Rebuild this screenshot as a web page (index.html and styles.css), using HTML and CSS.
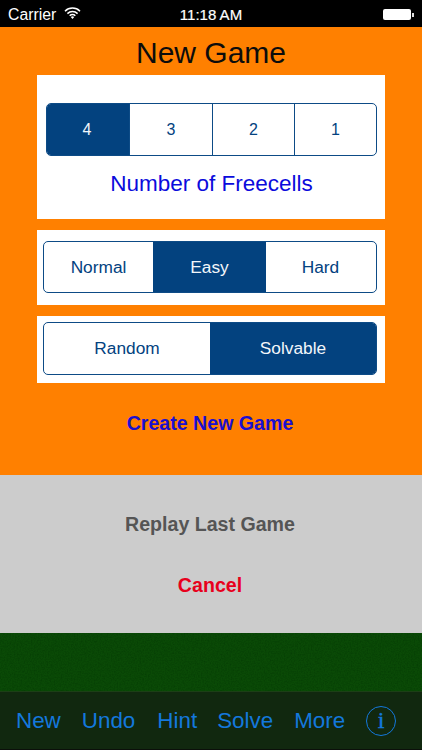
FILE: index.html
```html
<!DOCTYPE html>
<html lang="en">
<head>
<meta charset="utf-8">
<title>New Game</title>
<link rel="stylesheet" href="styles.css">
</head>
<body>
<div class="app">
  <header class="status">
    <div class="status-left">
      <span>Carrier</span>
      <svg class="wifi" width="17" height="12" viewBox="0 0 17 12"><path d="M1 4.2a10.6 10.6 0 0 1 15 0M3.4 6.6a7.2 7.2 0 0 1 10.2 0M5.7 8.8a3.9 3.9 0 0 1 5.6 0" fill="none" stroke="#fff" stroke-width="1.5"/><path d="M8.5 12l-1.7-1.9a2.4 2.4 0 0 1 3.4 0z" fill="#fff"/></svg>
    </div>
    <div class="status-time">11:18 AM</div>
    <div class="status-right">
      <span class="battery"></span><span class="battery-tip"></span>
    </div>
  </header>
  <section class="panel">
    <h1 class="title">New Game</h1>
    <div class="card card-cells">
      <div class="seg seg-cells">
        <div class="opt on">4</div>
        <div class="opt div">3</div>
        <div class="opt div">2</div>
        <div class="opt div">1</div>
      </div>
      <div class="cells-label">Number of Freecells</div>
    </div>
    <div class="card card-level">
      <div class="seg seg-level">
        <div class="opt">Normal</div>
        <div class="opt on">Easy</div>
        <div class="opt">Hard</div>
      </div>
    </div>
    <div class="card card-mode">
      <div class="seg seg-mode">
        <div class="opt">Random</div>
        <div class="opt on">Solvable</div>
      </div>
    </div>
    <div class="create">Create New Game</div>
  </section>
  <section class="sheet">
    <div class="replay">Replay Last Game</div>
    <div class="cancel">Cancel</div>
  </section>
  <section class="felt">
    <svg class="noise" width="100%" height="100%"><filter id="n" color-interpolation-filters="sRGB"><feTurbulence type="fractalNoise" baseFrequency="0.7" numOctaves="2" seed="4"/><feColorMatrix values="0 0 0 0 0.01  0 0 0 0 0.22  0 0 0 0 0.01  0 0 0 1.2 -0.42"/></filter><rect width="100%" height="100%" filter="url(#n)"/></svg>
  </section>
  <nav class="toolbar">
    <span class="tool t-new">New</span>
    <span class="tool t-undo">Undo</span>
    <span class="tool t-hint">Hint</span>
    <span class="tool t-solve">Solve</span>
    <span class="tool t-more">More</span>
    <span class="info">i</span>
  </nav>
</div>
</body>
</html>
```
FILE: styles.css
```css
* { box-sizing: border-box; }
html, body { margin: 0; padding: 0; }
body { font-family: "Liberation Sans", Arial, sans-serif; background: #000; }
.app { width: 422px; height: 750px; display: flex; flex-direction: column; overflow: hidden; }

.status { height: 27px; flex: none; background: #000; color: #fff; display: grid; grid-template-columns: 1fr auto 1fr; align-items: center; padding: 2px 8px 0 8px; font-size: 15.8px; }
.status-left { display: flex; align-items: center; gap: 8px; }
.wifi { margin-top: -3px; }
.status-time { white-space: nowrap; font-size: 15px; -webkit-text-stroke: 0.2px #fff; }
.status-right { display: flex; align-items: center; justify-content: flex-end; }
.battery { width: 28px; height: 11px; background: #fff; border-radius: 2px; }
.battery-tip { width: 2px; height: 4px; margin-left: 1px; background: #ddd; }

.panel { height: 448px; flex: none; background: #ff8000; display: flex; flex-direction: column; align-items: center; }
.title { margin: 7px 0 0; height: 41px; font-size: 30px; line-height: 38px; font-weight: 400; color: #0c0c0c; text-align: center; }
.card { width: 348px; background: #fff; }
.card-cells { height: 144px; padding: 28px 8px 0 9px; }
.card-level { height: 75px; margin-top: 11px; padding: 11px 8px 0 6px; }
.card-mode { height: 67px; margin-top: 11px; padding: 6px 8px 0 6px; }

.seg { display: flex; border: 1.5px solid #0d4b86; border-radius: 5px; overflow: hidden; color: #03427f; background: #fff; }
.seg-cells { height: 53px; font-size: 16px; }
.seg-level { height: 52px; font-size: 17.3px; }
.seg-mode { height: 53px; font-size: 17.3px; }
.opt { display: flex; align-items: center; justify-content: center; flex: 1 1 0; }
.opt.on { background: #03427f; color: #f2f6fa; }
.opt.div { border-left: 1.5px solid #0d4b86; }
.seg-cells .opt { flex: none; width: 82px; }
.seg-cells .opt:nth-child(1) { padding-right: 2px; }
.seg-cells .opt:nth-child(2) { width: 83px; }
.seg-cells .opt:nth-child(4) { flex: 1; }
.seg-level .opt { flex: none; }
.seg-level .opt:nth-child(1) { width: 109px; }
.seg-level .opt:nth-child(2) { width: 113px; }
.seg-level .opt:nth-child(3) { width: 109px; }
.seg-mode .opt:nth-child(1) { flex: none; width: 166px; }
.seg-mode .opt:nth-child(2) { flex: 1; }

.cells-label { margin-top: 15px; text-align: center; font-size: 22.5px; line-height: 25px; color: #0b0bdc; }
.create { margin-top: 28px; padding-right: 2px; font-size: 19.6px; line-height: 24px; font-weight: 700; color: #1a0fd0; text-align: center; }

.sheet { height: 158px; flex: none; background: #cccccc; display: flex; flex-direction: column; align-items: center; padding-right: 2px; font-size: 19.6px; font-weight: 700; }
.replay { margin-top: 37px; line-height: 24px; color: #555; }
.cancel { margin-top: 37px; line-height: 24px; color: #e8001c; }

.felt { height: 58px; flex: none; background: #0a4a06; position: relative; overflow: hidden; }
.noise { display: block; }

.toolbar { height: 59px; flex: none; background: #11280f; border-top: 1px solid #1c3f16; border-bottom: 1px solid #0b0f0a; display: flex; align-items: center; padding: 0 0 0 16px; font-size: 22.4px; color: #1478dc; }
.tool { display: block; line-height: 26px; }
.t-undo { margin-left: 21px; }
.t-hint { margin-left: 22px; }
.t-solve { margin-left: 20px; }
.t-more { margin-left: 21px; }
.info { width: 30px; height: 30px; margin-left: 21px; border: 1.5px solid #1478dc; border-radius: 50%; display: flex; align-items: center; justify-content: center; font-family: "Liberation Serif", serif; font-size: 24px; font-weight: 400; -webkit-text-stroke: 0.4px #1478dc; }
```
